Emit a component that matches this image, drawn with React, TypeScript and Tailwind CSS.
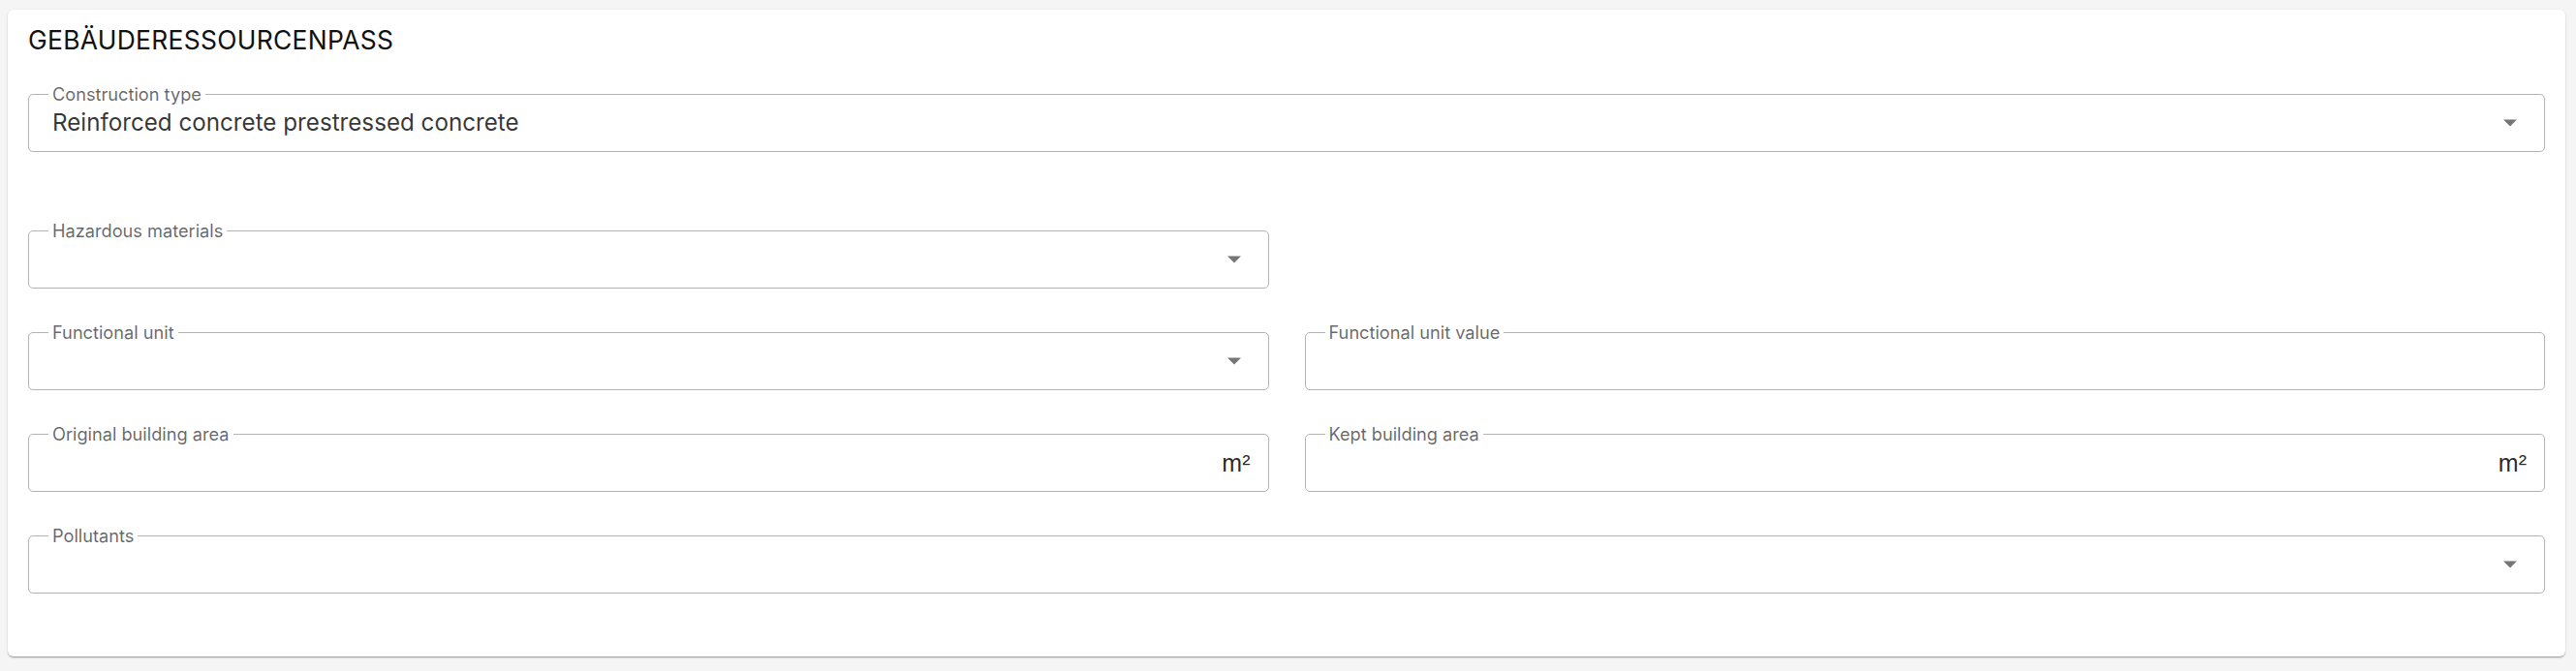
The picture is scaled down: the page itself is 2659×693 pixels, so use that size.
import React from 'react';

type FieldProps = {
  label: string;
  value?: string;
  select?: boolean;
  unit?: string;
};

function Field({ label, value, select, unit }: FieldProps) {
  return (
    <div className="relative h-[60px] rounded-[5px] border border-[#b4b4b4] bg-white flex items-center pl-[24px]">
      <span className="absolute left-[20px] -top-[12px] bg-white px-[4px] text-[18.2px] leading-[22px] text-black/60 whitespace-nowrap">
        {label}
      </span>
      <span className="flex-1 text-[24.2px] leading-[30px] text-black/80 whitespace-nowrap">{value}</span>
      {unit && (
        <span className="pr-[18px] text-[25px] leading-[30px] text-black/85 [font-family:'Liberation_Sans',Arial,sans-serif]">
          {unit}
        </span>
      )}
      {select && (
        <svg className="mr-[28px] w-[14px] h-[8px]" viewBox="0 0 14 8">
          <path d="M0 0.5 L7 7.5 L14 0.5 Z" fill="#757575" />
        </svg>
      )}
    </div>
  );
}

export default function App() {
  return (
    <div className="min-h-screen bg-[#f5f5f5] pt-[10px] pl-[8px] pr-[11px] [font-family:Inter,'Noto_Sans',sans-serif]">
      <div className="bg-white rounded-[6px] shadow-[0_2px_2px_-1px_rgba(0,0,0,0.2),0_1px_3px_0_rgba(0,0,0,0.12),0_1px_1px_0_rgba(0,0,0,0.14)] px-[21px] pt-[12px] pb-[65px]">
        <h1 className="h-[38px] text-[26.4px] leading-[38px] tracking-[0.012em] text-[#111]">GEBÄUDERESSOURCENPASS</h1>

        <div className="mt-[37px]">
          <Field label="Construction type" value="Reinforced concrete prestressed concrete" select />
        </div>

        <div className="mt-[81px] grid grid-cols-2 gap-x-[37px] gap-y-[45px]">
          <Field label="Hazardous materials" select />
          <div />
          <Field label="Functional unit" select />
          <Field label="Functional unit value" />
          <Field label="Original building area" unit="m²" />
          <Field label="Kept building area" unit="m²" />
        </div>

        <div className="mt-[45px]">
          <Field label="Pollutants" select />
        </div>
      </div>
    </div>
  );
}
